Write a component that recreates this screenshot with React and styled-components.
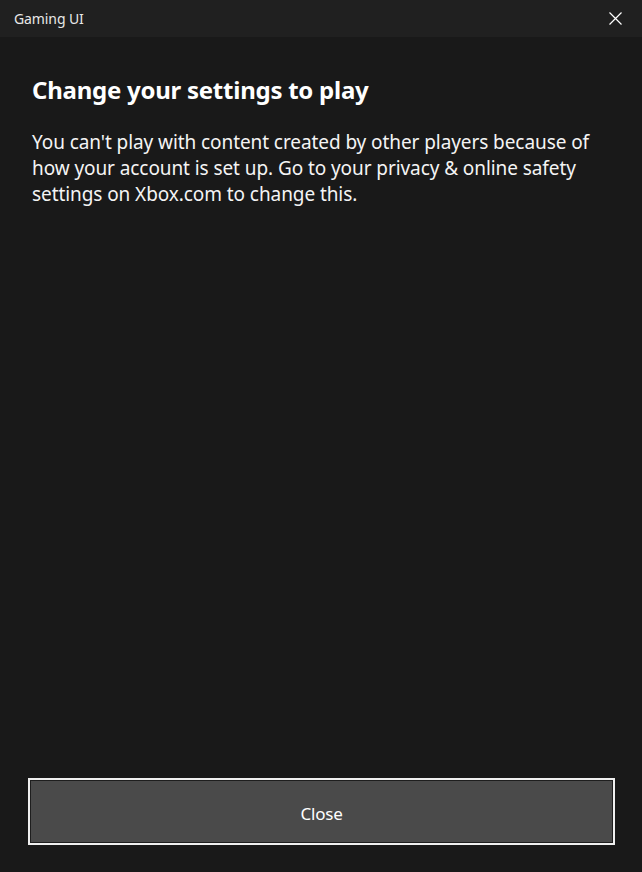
import React from "react";
import styled, { createGlobalStyle } from "styled-components";

const Global = createGlobalStyle`
  html, body { margin: 0; padding: 0; background: #191919; }
  body { font-family: "Noto Sans", "Open Sans", sans-serif; }
  * { box-sizing: border-box; }
`;

const Window = styled.div`
  width: 642px;
  height: 872px;
  display: flex;
  flex-direction: column;
  background: #191919;
  color: #ffffff;
`;

const TitleBar = styled.div`
  height: 37px;
  flex: none;
  display: flex;
  align-items: center;
  justify-content: space-between;
  padding: 0 20px 0 14px;
  background: #202020;
`;

const TitleText = styled.span`
  font-family: "Noto Sans", sans-serif;
  font-size: 14px;
  color: #e8e8e8;
  letter-spacing: -0.1px;
`;

const CloseIcon = styled.svg`
  width: 13px;
  height: 13px;
  display: block;
`;

const Content = styled.div`
  flex: 1;
  display: flex;
  flex-direction: column;
  padding: 37px 28px 27px 28px;
`;

const Heading = styled.h1`
  margin: 0 0 0 4px;
  font-size: 24px;
  font-weight: 700;
  line-height: 32px;
  letter-spacing: -0.25px;
`;

const Body = styled.p`
  margin: 23px 0 0 4px;
  font-size: 19px;
  line-height: 26px;
  letter-spacing: -0.08px;
  color: #f4f4f4;
  max-width: 566px;
`;

const Spacer = styled.div`
  flex: 1;
`;

const Button = styled.button`
  height: 67px;
  width: 587px;
  background: #4a4a4a;
  border: 2px solid #f0f0f0;
  box-shadow: inset 0 0 0 1px #1e1e1e;
  color: #ffffff;
  font-family: "Noto Sans", sans-serif;
  font-size: 17px;
  letter-spacing: -0.2px;
  padding: 3px 0 0 0;
`;

export default function App() {
  return (
    <>
      <Global />
      <Window>
        <TitleBar>
          <TitleText>Gaming UI</TitleText>
          <CloseIcon viewBox="0 0 13 13">
            <path d="M0.5 0.5 L12.5 12.5 M12.5 0.5 L0.5 12.5" stroke="#ffffff" strokeWidth="1.2" fill="none" />
          </CloseIcon>
        </TitleBar>
        <Content>
          <Heading>Change your settings to play</Heading>
          <Body>
            You can't play with content created by other players because of how your account is set up. Go to your privacy &amp; online safety settings on Xbox.com to change this.
          </Body>
          <Spacer />
          <Button>Close</Button>
        </Content>
      </Window>
    </>
  );
}
